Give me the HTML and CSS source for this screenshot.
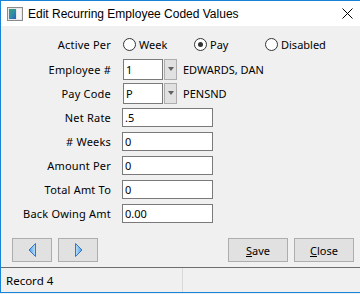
FILE: index.html
```html
<!DOCTYPE html>
<html lang="en">
<head>
    <meta charset="UTF-8">
    <title>Edit Recurring Employee Coded Values</title>
    <link rel="stylesheet" href="styles.css">
</head>
<body>

    <div class="window">
        <div class="titlebar">
            <svg class="app-icon" width="16" height="14" viewBox="0 0 16 14">
                <defs>
                    <linearGradient id="pane" x1="0" y1="0" x2="1" y2="1">
                        <stop offset="0" stop-color="#3aa06a"/>
                        <stop offset="0.5" stop-color="#2f8fa8"/>
                        <stop offset="1" stop-color="#2a5fbf"/>
                    </linearGradient>
                </defs>
                <rect x="0.5" y="0.5" width="15" height="13" fill="#e8e8e8" stroke="#8a8a8a"/>
                <rect x="2" y="2" width="7" height="10" fill="url(#pane)"/>
                <rect x="10" y="2" width="4" height="10" fill="#f6f6f6"/>
            </svg>
            <span class="title">Edit Recurring Employee Coded Values</span>
            <svg class="close-icon" width="11" height="11" viewBox="0 0 11 11">
                <path d="M0.5 0.5 L10.5 10.5 M10.5 0.5 L0.5 10.5" stroke="#000" stroke-width="1"/>
            </svg>
        </div>

        <div class="client">
            <div class="fields">
                <div class="row-label">Active Per</div>
                <div class="row-field">
                    <span class="radio"><span class="dot"></span>Week</span>
                    <span class="radio"><span class="dot checked"></span>Pay</span>
                    <span class="radio"><span class="dot"></span>Disabled</span>
                </div>

                <div class="row-label">Employee #</div>
                <div class="row-field">
                    <span class="combo">
                        <span class="combo-text">1</span>
                        <span class="combo-btn"><span class="arrow-down"></span></span>
                    </span>
                    <span class="combo-desc">EDWARDS, DAN</span>
                </div>

                <div class="row-label">Pay Code</div>
                <div class="row-field">
                    <span class="combo">
                        <span class="combo-text">P</span>
                        <span class="combo-btn"><span class="arrow-down"></span></span>
                    </span>
                    <span class="combo-desc">PENSND</span>
                </div>

                <div class="row-label">Net Rate</div>
                <div class="row-field"><span class="textbox">.5</span></div>

                <div class="row-label"># Weeks</div>
                <div class="row-field"><span class="textbox">0</span></div>

                <div class="row-label">Amount Per</div>
                <div class="row-field"><span class="textbox">0</span></div>

                <div class="row-label">Total Amt To</div>
                <div class="row-field"><span class="textbox">0</span></div>

                <div class="row-label">Back Owing Amt</div>
                <div class="row-field"><span class="textbox">0.00</span></div>
            </div>

            <div class="button-row">
                <div class="nav-buttons">
                    <button type="button" class="btn btn-nav">
                        <svg width="9" height="14" viewBox="0 0 9 14">
                            <defs>
                                <linearGradient id="arrL" x1="0" y1="0" x2="1" y2="0">
                                    <stop offset="0" stop-color="#4b9be0"/>
                                    <stop offset="1" stop-color="#bfe0fa"/>
                                </linearGradient>
                            </defs>
                            <path d="M7.5 0.5 L1 7 L7.5 13.5 Z" fill="url(#arrL)" stroke="#2f78c8" stroke-width="1"/>
                        </svg>
                    </button>
                    <button type="button" class="btn btn-nav">
                        <svg width="9" height="14" viewBox="0 0 9 14">
                            <defs>
                                <linearGradient id="arrR" x1="0" y1="0" x2="1" y2="0">
                                    <stop offset="0" stop-color="#bfe0fa"/>
                                    <stop offset="1" stop-color="#4b9be0"/>
                                </linearGradient>
                            </defs>
                            <path d="M1.5 0.5 L8 7 L1.5 13.5 Z" fill="url(#arrR)" stroke="#2f78c8" stroke-width="1"/>
                        </svg>
                    </button>
                </div>
                <div class="action-buttons">
                    <button type="button" class="btn btn-action"><u>S</u>ave</button>
                    <button type="button" class="btn btn-action"><u>C</u>lose</button>
                </div>
            </div>
        </div>

        <div class="statusbar">
            <div class="panel panel-main">Record 4</div>
            <div class="panel"></div>
        </div>
    </div>

</body>
</html>
```

FILE: styles.css
```css
body {
    margin: 0;
    overflow: hidden;
    background-color: #f0f0f0;
    font-family: "Noto Sans", "Liberation Sans", sans-serif;
    font-size: 11px;
    color: #000;
}

.window {
    width: 360px;
    height: 293px;
    border-top: 1px solid #1883d7;
    border-left: 1px solid #1883d7;
    border-bottom: 1px solid #1883d7;
    box-sizing: border-box;
    display: flex;
    flex-direction: column;
    background-color: #f0f0f0;
}

.titlebar {
    height: 25px;
    flex: none;
    background-color: #fff;
    display: flex;
    align-items: center;
    padding-left: 6px;
}

.app-icon {
    flex: none;
}

.title {
    margin-left: 5px;
    font-family: "Liberation Sans", Arial, sans-serif;
    font-size: 12px;
    flex: 1;
}

.close-icon {
    margin-right: 7px;
    flex: none;
}

.client {
    flex: 1;
    display: flex;
    flex-direction: column;
}

.fields {
    display: grid;
    grid-template-columns: 110px 1fr;
    grid-template-rows: 25px repeat(7, 24px);
    column-gap: 11px;
    margin-top: 6px;
}

.row-label {
    text-align: right;
    align-self: center;
    letter-spacing: 0.2px;
}

.row-field {
    display: flex;
    align-items: center;
}

.radio {
    width: 70px;
    display: flex;
    align-items: center;
    padding-left: 1px;
}

.dot {
    width: 11px;
    height: 11px;
    border: 1px solid #333;
    border-radius: 50%;
    background-color: #fff;
    margin-right: 3px;
    position: relative;
}

.dot.checked::after {
    content: "";
    position: absolute;
    left: 3px;
    top: 3px;
    width: 5px;
    height: 5px;
    border-radius: 50%;
    background-color: #333;
}

.combo {
    display: flex;
    height: 21px;
    margin-left: 1px;
}

.combo-text {
    width: 36px;
    border: 1px solid #7a7a7a;
    background-color: #fff;
    padding-left: 2px;
    line-height: 19px;
}

.combo-btn {
    width: 11px;
    margin-left: 1px;
    border: 1px solid #adadad;
    background-color: #e1e1e1;
    display: flex;
    align-items: center;
    justify-content: center;
}

.arrow-down {
    width: 0;
    height: 0;
    border-left: 3px solid transparent;
    border-right: 3px solid transparent;
    border-top: 4px solid #606060;
}

.combo-desc {
    margin-left: 6px;
}

.textbox {
    width: 87px;
    height: 17px;
    line-height: 17px;
    border: 1px solid #7a7a7a;
    background-color: #fff;
    padding-left: 2px;
}

.button-row {
    display: flex;
    justify-content: space-between;
    margin-top: 13px;
    padding: 0 6px 0 11px;
}

.nav-buttons, .action-buttons {
    display: flex;
    gap: 6px;
}

.btn {
    height: 24px;
    border: 1px solid #adadad;
    background-color: #e1e1e1;
    font-family: "Noto Sans", "Liberation Sans", sans-serif;
    font-size: 11px;
    color: #000;
    padding: 0;
    display: flex;
    align-items: center;
    justify-content: center;
}

.btn-nav {
    width: 40px;
}

.btn-action {
    width: 60px;
}

.statusbar {
    height: 24px;
    flex: none;
    border-top: 1px solid #6d6d6d;
    display: flex;
}

.panel {
    flex: 1;
    border-left: 1px solid #d9d9d9;
    display: flex;
    align-items: center;
    padding-left: 4px;
    font-size: 11.5px;
}

.panel-main {
    width: 176px;
    flex: none;
    border-left: none;
    padding-left: 5px;
}
```
